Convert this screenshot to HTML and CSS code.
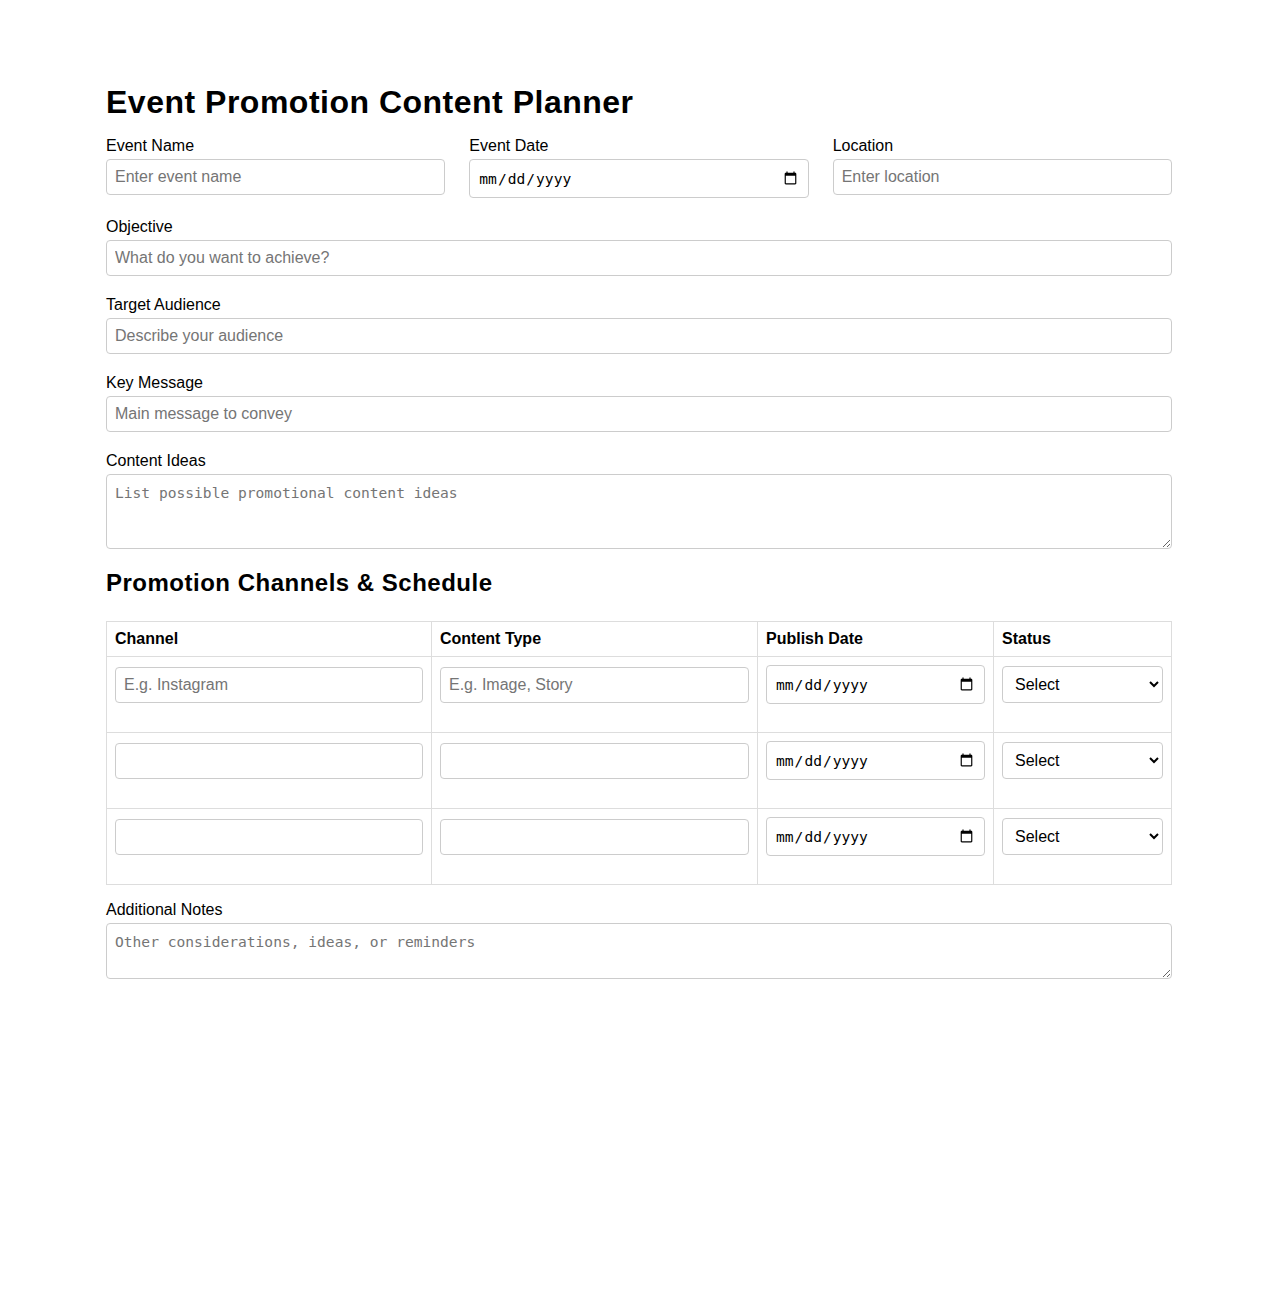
FILE: index.html
```html
<!DOCTYPE html>
<html lang="en">
<head>
<meta charset="utf-8">
<title>Event Promotion Content Planner</title>
<link rel="stylesheet" href="styles.css">
</head>
<body>
<div class="container">
  <h1 class="title">Event Promotion Content Planner</h1>

  <div class="row-3">
    <div class="field">
      <label class="label">Event Name</label>
      <input class="control" type="text" placeholder="Enter event name">
    </div>
    <div class="field">
      <label class="label">Event Date</label>
      <input class="control date" type="date">
    </div>
    <div class="field">
      <label class="label">Location</label>
      <input class="control" type="text" placeholder="Enter location">
    </div>
  </div>

  <div class="field">
    <label class="label">Objective</label>
    <input class="control" type="text" placeholder="What do you want to achieve?">
  </div>
  <div class="field">
    <label class="label">Target Audience</label>
    <input class="control" type="text" placeholder="Describe your audience">
  </div>
  <div class="field">
    <label class="label">Key Message</label>
    <input class="control" type="text" placeholder="Main message to convey">
  </div>
  <div class="field">
    <label class="label">Content Ideas</label>
    <textarea class="control area area-lg" placeholder="List possible promotional content ideas"></textarea>
  </div>

  <h2 class="subtitle">Promotion Channels &amp; Schedule</h2>

  <table class="schedule">
    <colgroup>
      <col class="c1"><col class="c2"><col class="c3"><col class="c4">
    </colgroup>
    <thead>
      <tr><th>Channel</th><th>Content Type</th><th>Publish Date</th><th>Status</th></tr>
    </thead>
    <tbody>
      <tr>
        <td><input class="control cell-text" type="text" placeholder="E.g. Instagram"></td>
        <td><input class="control cell-text" type="text" placeholder="E.g. Image, Story"></td>
        <td><input class="control date cell-date" type="date"></td>
        <td><select class="control cell-select"><option>Select</option><option>Planned</option><option>In Progress</option><option>Published</option></select></td>
      </tr>
      <tr>
        <td><input class="control cell-text" type="text"></td>
        <td><input class="control cell-text" type="text"></td>
        <td><input class="control date cell-date" type="date"></td>
        <td><select class="control cell-select"><option>Select</option><option>Planned</option><option>In Progress</option><option>Published</option></select></td>
      </tr>
      <tr>
        <td><input class="control cell-text" type="text"></td>
        <td><input class="control cell-text" type="text"></td>
        <td><input class="control date cell-date" type="date"></td>
        <td><select class="control cell-select"><option>Select</option><option>Planned</option><option>In Progress</option><option>Published</option></select></td>
      </tr>
    </tbody>
  </table>

  <div class="field">
    <label class="label">Additional Notes</label>
    <textarea class="control area area-sm" placeholder="Other considerations, ideas, or reminders"></textarea>
  </div>
</div>
</body>
</html>
```

FILE: styles.css
```css
* { box-sizing: border-box; }

body {
  margin: 0;
  font-family: "Liberation Sans", Arial, sans-serif;
  font-size: 16px;
  color: #000;
  background: #fff;
}

.container {
  max-width: 1066px;
  margin: 0 auto;
  padding-top: 84px;
  padding-bottom: 40px;
}

.title {
  font-size: 32px;
  font-weight: bold;
  letter-spacing: 0.5px;
  line-height: 37px;
  margin: 0 0 16px;
}

.subtitle {
  font-size: 24px;
  font-weight: bold;
  letter-spacing: 0.5px;
  line-height: 28px;
  margin: 0 0 24px;
}

.row-3 {
  display: grid;
  grid-template-columns: repeat(3, 1fr);
  column-gap: 24px;
}

.field {
  margin-bottom: 20px;
}

.label {
  display: block;
  line-height: 18px;
  margin-bottom: 4px;
}

.control {
  display: block;
  width: 100%;
  height: 36px;
  margin: 0;
  padding: 8px;
  border: 1px solid #ccc;
  border-radius: 4px;
  font-family: "Liberation Sans", Arial, sans-serif;
  font-size: 16px;
  color: #000;
  background: #fff;
}

.control::placeholder {
  color: #757575;
}

.date {
  height: 39px;
  font-family: "DejaVu Sans Mono", "Liberation Mono", monospace;
  font-size: 14.6px;
}

.area {
  font-family: "DejaVu Sans Mono", "Liberation Mono", monospace;
  font-size: 14.6px;
  line-height: 19px;
  resize: vertical;
}

.area-lg { height: 75px; }
.area-sm { height: 56px; }

.schedule {
  width: calc(100% - 1px);
  border-collapse: collapse;
  table-layout: fixed;
  margin-bottom: 16px;
}

.schedule .c1 { width: 325px; }
.schedule .c2 { width: 326px; }
.schedule .c3 { width: 236px; }
.schedule .c4 { width: 178px; }

.schedule th,
.schedule td {
  border: 1px solid #ddd;
  padding: 8px;
  text-align: left;
  vertical-align: top;
}

.schedule th {
  font-weight: bold;
  line-height: 18px;
}

.cell-text {
  margin-top: 2px;
  margin-bottom: 19px;
}

.cell-date {
  margin-bottom: 20px;
}

.cell-select {
  margin-top: 1px;
  height: 37px;
  padding: 8px 4px 8px 8px;
}
```
